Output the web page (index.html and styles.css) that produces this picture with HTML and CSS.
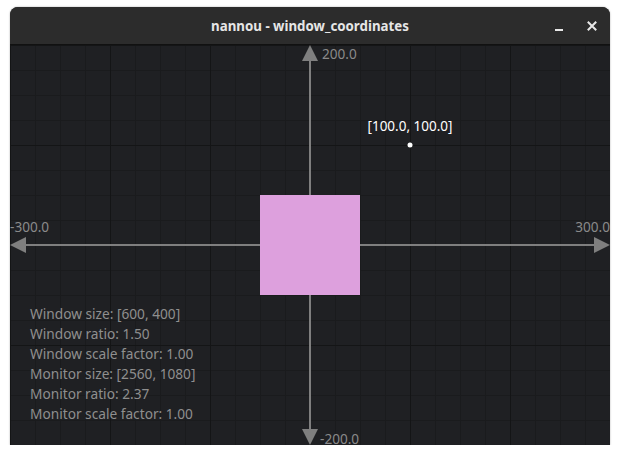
FILE: index.html
```html
<!DOCTYPE html>
<html>
<head>
<meta charset="utf-8">
<title>nannou - window_coordinates</title>
<link rel="stylesheet" href="styles.css">
</head>
<body>
<div class="window">
  <div class="titlebar">
    <div class="title">nannou - window_coordinates</div>
    <div class="controls">
      <span class="btn-min"></span>
      <svg class="btn-close" width="10" height="10" viewBox="0 0 10 10"><path d="M1.5 1.5 L8.5 8.5 M8.5 1.5 L1.5 8.5" stroke="#e8e8e8" stroke-width="2" stroke-linecap="square"/></svg>
    </div>
  </div>
  <svg class="canvas" width="600" height="400" viewBox="0 0 600 400">
    <defs>
      <pattern id="minor" width="25" height="25" patternUnits="userSpaceOnUse">
        <path d="M0 0 H25 M0 0 V25" stroke="#1a1b1d" stroke-width="2" fill="none"/>
      </pattern>
      <pattern id="major" width="100" height="100" patternUnits="userSpaceOnUse">
        <path d="M0 0 H100 M0 0 V100" stroke="#141516" stroke-width="2" fill="none"/>
      </pattern>
    </defs>
    <rect width="600" height="400" fill="#1f2023"/>
    <rect width="600" height="400" fill="url(#minor)"/>
    <rect width="600" height="400" fill="url(#major)"/>

    <g class="axes">
      <line x1="300" y1="14" x2="300" y2="386" stroke="#7f7f7f" stroke-width="2"/>
      <line x1="14" y1="200" x2="586" y2="200" stroke="#7f7f7f" stroke-width="2"/>
      <polygon points="300,0 308,16 292,16" fill="#7f7f7f"/>
      <polygon points="300,400 308,384 292,384" fill="#7f7f7f"/>
      <polygon points="0,200 16,192 16,208" fill="#7f7f7f"/>
      <polygon points="600,200 584,192 584,208" fill="#7f7f7f"/>
    </g>

    <text class="lbl" x="0" y="187">-300.0</text>
    <text class="lbl" x="600" y="187" text-anchor="end">300.0</text>
    <text class="lbl" x="312" y="14">200.0</text>
    <text class="lbl" x="310" y="398.5">-200.0</text>

    <rect x="250" y="150" width="100" height="100" fill="#dda0dd"/>

    <circle cx="400" cy="100" r="2.5" fill="#ffffff"/>
    <text class="pt" x="400" y="86" text-anchor="middle">[100.0, 100.0]</text>

    <g class="info">
      <text x="20" y="274">Window size: [600, 400]</text>
      <text x="20" y="294">Window ratio: 1.50</text>
      <text x="20" y="314">Window scale factor: 1.00</text>
      <text x="20" y="334">Monitor size: [2560, 1080]</text>
      <text x="20" y="354">Monitor ratio: 2.37</text>
      <text x="20" y="374">Monitor scale factor: 1.00</text>
    </g>
  </svg>
</div>
</body>
</html>
```

FILE: styles.css
```css
html, body {
  margin: 0;
  padding: 0;
  background: #ffffff;
}

body {
  padding: 7px 10px 0 10px;
}

.window {
  width: 600px;
  border-radius: 8px 8px 0 0;
  overflow: hidden;
  background: #2b2b2b;
  box-shadow: 0 0 2px rgba(0, 0, 0, 0.35);
}

.titlebar {
  height: 37px;
  border-bottom: 1px solid #111111;
  background: #2c2c2c;
  display: flex;
  align-items: center;
  justify-content: center;
  position: relative;
}

.title {
  font-family: "Noto Sans", "Open Sans", sans-serif;
  font-weight: bold;
  font-size: 13.3px;
  color: #e6e6e6;
  margin-top: 1px;
}

.controls {
  position: absolute;
  right: 13px;
  top: 0;
  height: 37px;
  display: flex;
  align-items: center;
  gap: 24px;
}

.btn-min {
  display: block;
  width: 8px;
  height: 2px;
  background: #e8e8e8;
  margin-top: 8px;
}

.btn-close {
  display: block;
}

.canvas {
  display: block;
}

.lbl {
  font-family: "Noto Sans", "Open Sans", sans-serif;
  font-size: 13.6px;
  fill: #8a8a8a;
}

.pt {
  font-family: "Noto Sans", "Open Sans", sans-serif;
  font-size: 13.5px;
  fill: #ffffff;
}

.info text {
  font-family: "Noto Sans", "Open Sans", sans-serif;
  font-size: 13.7px;
  fill: #8f8f8f;
}
```
